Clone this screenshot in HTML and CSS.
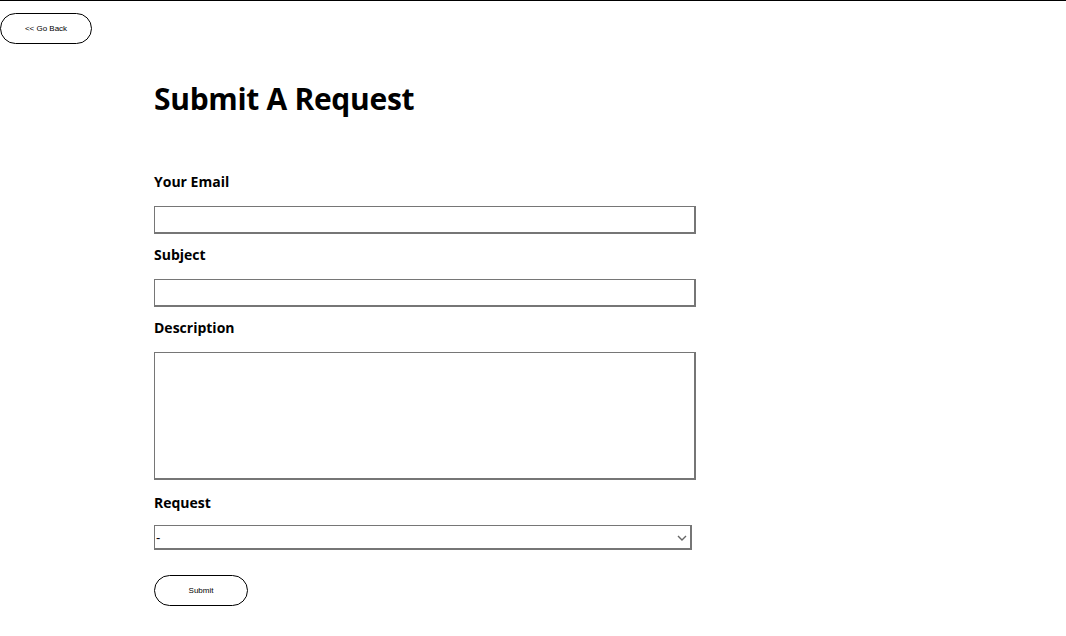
FILE: index.html
```html
<!DOCTYPE html>
<html>
<head>
<meta charset="utf-8">
<link rel="stylesheet" href="styles.css">
</head>
<body>
<div class="topbar"></div>
<button class="pill back">&lt;&lt; Go Back</button>
<main class="page">
  <h1 class="title">Submit A Request</h1>
  <form class="form">
    <label class="label">Your Email</label>
    <input class="field" type="text">
    <label class="label">Subject</label>
    <input class="field" type="text">
    <label class="label">Description</label>
    <textarea class="field area"></textarea>
    <label class="label label-request">Request</label>
    <div class="select-wrap">
      <select class="select"><option>-</option></select>
      <svg class="chevron" width="10" height="6" viewBox="0 0 10 6"><path d="M1 1l4 4 4-4" fill="none" stroke="#666" stroke-width="1.4"/></svg>
    </div>
    <button class="pill submit" type="button">Submit</button>
  </form>
</main>
</body>
</html>
```

FILE: styles.css
```css
html, body {
  margin: 0;
  padding: 0;
  background: #fff;
  font-family: "Open Sans", "Noto Sans", sans-serif;
  color: #000;
}
.topbar {
  height: 1px;
  background: #000;
}
.pill {
  display: block;
  background: #fff;
  border: 1px solid #000;
  border-radius: 16px;
  font-family: "Liberation Sans", Arial, sans-serif;
  font-size: 8px;
  color: #000;
  padding: 0;
  cursor: pointer;
}
.back {
  margin-top: 12px;
  width: 92px;
  height: 31px;
}
.page {
  padding-left: 154px;
}
.title {
  margin: 33px 0 0;
  font-size: 30px;
  font-weight: 700;
  line-height: 44px;
  letter-spacing: -0.3px;
}
.form {
  display: flex;
  flex-direction: column;
  align-items: flex-start;
  width: 542px;
  margin-top: 51px;
}
.label {
  font-size: 14px;
  font-weight: 700;
  line-height: 20px;
  margin-bottom: 14px;
}
.label-request {
  margin-top: 2px;
  margin-bottom: 12px;
}
.field {
  box-sizing: border-box;
  width: 542px;
  height: 28px;
  border: 1px solid #767676;
  border-right-width: 2px;
  border-bottom-width: 2px;
  margin: 0 0 11px;
  padding: 0;
  font-family: inherit;
  resize: none;
}
.area {
  height: 128px;
}
.select-wrap {
  position: relative;
  margin: 0 0 25px;
}
.select {
  display: block;
  box-sizing: border-box;
  width: 538px;
  height: 25px;
  border: 1px solid #767676;
  border-right-width: 2px;
  border-bottom-width: 2px;
  margin: 0;
  padding: 0 0 0 1px;
  font-family: "Liberation Sans", Arial, sans-serif;
  font-size: 13px;
  color: #000;
  background: #fff;
  appearance: none;
  -webkit-appearance: none;
  border-radius: 0;
}
.chevron {
  position: absolute;
  right: 5px;
  top: 10px;
  pointer-events: none;
}
.submit {
  width: 94px;
  height: 31px;
}
```
